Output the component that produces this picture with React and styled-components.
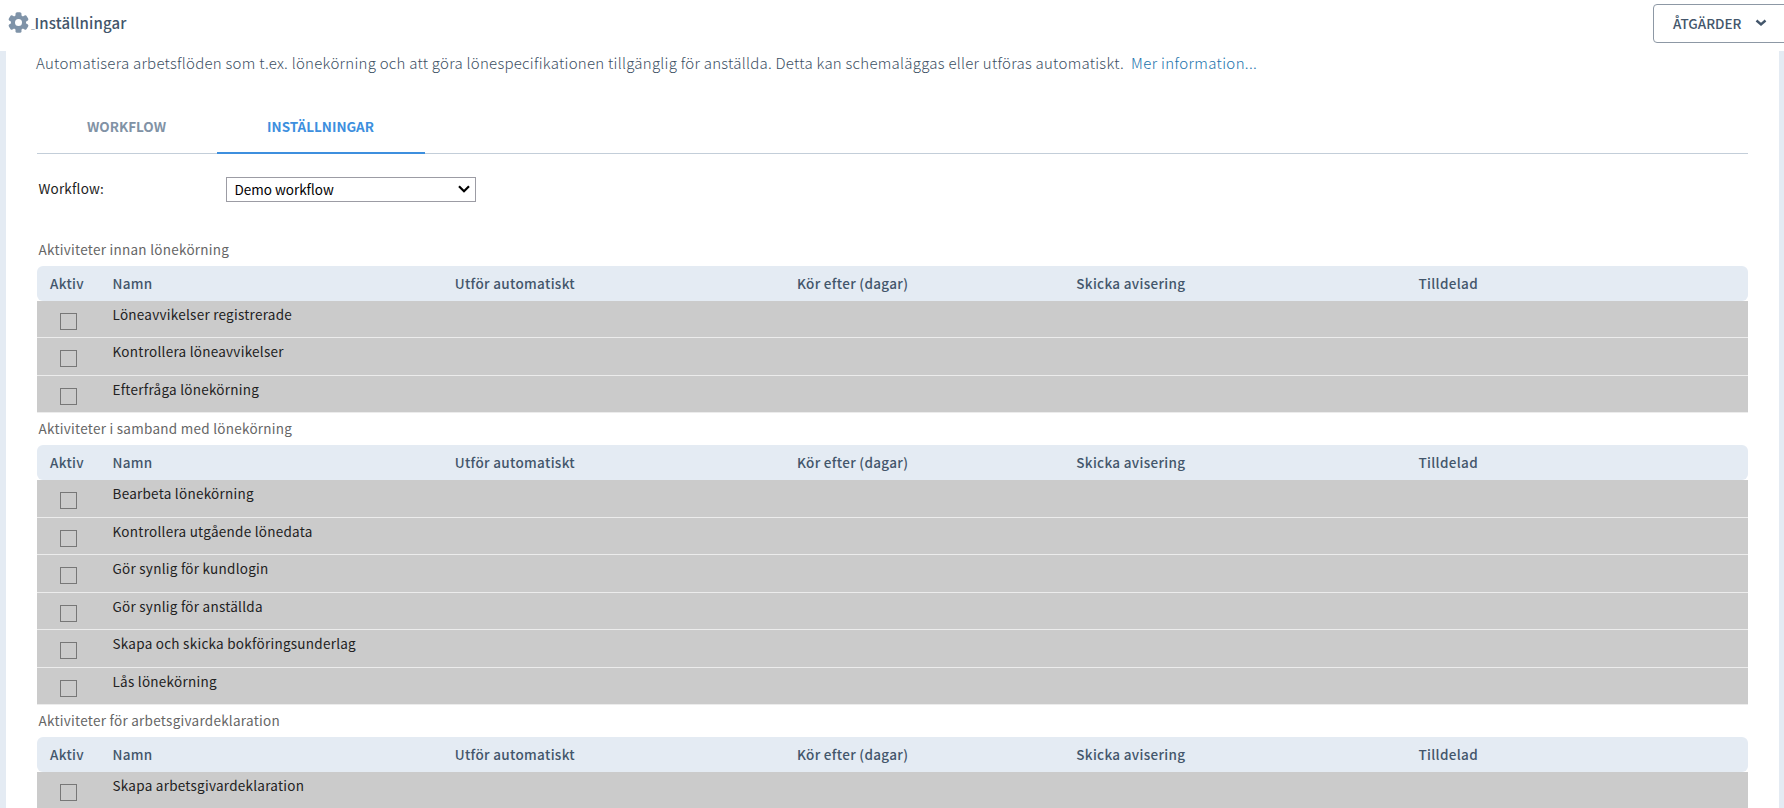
import React, { useState } from "react";
import styled, { createGlobalStyle } from "styled-components";

const columns = [
  "Aktiv",
  "Namn",
  "Utför automatiskt",
  "Kör efter (dagar)",
  "Skicka avisering",
  "Tilldelad",
];

const sections = [
  {
    title: "Aktiviteter innan lönekörning",
    rows: [
      "Löneavvikelser registrerade",
      "Kontrollera löneavvikelser",
      "Efterfråga lönekörning",
    ],
  },
  {
    title: "Aktiviteter i samband med lönekörning",
    rows: [
      "Bearbeta lönekörning",
      "Kontrollera utgående lönedata",
      "Gör synlig för kundlogin",
      "Gör synlig för anställda",
      "Skapa och skicka bokföringsunderlag",
      "Lås lönekörning",
    ],
  },
  {
    title: "Aktiviteter för arbetsgivardeklaration",
    rows: ["Skapa arbetsgivardeklaration"],
  },
];

const App = () => {
  const [tab, setTab] = useState("Inställningar");

  return (
    <StyledPage>
      <GlobalStyle />
      <StyledTopBar>
        <StyledTitle>
          <GearIcon />
          <StyledMark>_</StyledMark>
          <h1>Inställningar</h1>
        </StyledTitle>
        <StyledActions>
          Åtgärder
          <svg width="12" height="8" viewBox="0 0 12 8">
            <path d="M1.5 1.5 L6 5.5 L10.5 1.5" />
          </svg>
        </StyledActions>
      </StyledTopBar>
      <StyledContent>
        <StyledIntro>
          <span>
            Automatisera arbetsflöden som t.ex. lönekörning och att göra
            lönespecifikationen tillgänglig för anställda. Detta kan
            schemaläggas eller utföras automatiskt.
          </span>
          <StyledLink>Mer information...</StyledLink>
        </StyledIntro>
        <StyledTabs>
          {["Workflow", "Inställningar"].map((name) => (
            <StyledTab
              key={name}
              $active={tab === name}
              onClick={() => setTab(name)}
            >
              {name}
            </StyledTab>
          ))}
        </StyledTabs>
        <StyledField>
          <label>Workflow:</label>
          <StyledSelect>
            <span>Demo workflow</span>
            <svg width="12" height="8" viewBox="0 0 12 8">
              <path d="M1 1.2 L6 6.2 L11 1.2" />
            </svg>
          </StyledSelect>
        </StyledField>
        {sections.map((section) => (
          <section key={section.title}>
            <StyledCaption>{section.title}</StyledCaption>
            <StyledHead>
              {columns.map((column) => (
                <span key={column}>{column}</span>
              ))}
            </StyledHead>
            {section.rows.map((row) => (
              <StyledRow key={row}>
                <StyledCheckbox type="checkbox" />
                <StyledName>{row}</StyledName>
              </StyledRow>
            ))}
          </section>
        ))}
      </StyledContent>
    </StyledPage>
  );
};

const GearIcon = () => (
  <StyledGear viewBox="0 0 24 24">
    <circle cx="12" cy="12" r="8.6" />
    {[0, 60, 120].map((angle) => (
      <rect
        key={angle}
        x="8.6"
        y="0.2"
        width="6.8"
        height="23.6"
        rx="1.8"
        transform={`rotate(${angle} 12 12)`}
      />
    ))}
    <circle cx="12" cy="12" r="4" fill="#fff" />
  </StyledGear>
);

const GlobalStyle = createGlobalStyle`
  * {
    box-sizing: border-box;
  }
  body {
    margin: 0;
    overflow: hidden;
    background: #fff;
    font-family: "Noto Sans CJK JP", "Noto Sans", sans-serif;
    font-size: 13.5px;
    color: #222;
  }
`;

const StyledPage = styled.div`
  height: 808px;
  overflow: hidden;
`;

const StyledTopBar = styled.header`
  display: flex;
  justify-content: space-between;
  height: 51px;
  padding-top: 4px;
`;

const StyledTitle = styled.div`
  display: flex;
  align-items: center;
  height: 37px;
  padding-left: 8px;
  color: #43566b;
  h1 {
    margin: 0;
    font-size: 15px;
    font-weight: 500;
    letter-spacing: 0.15px;
  }
`;

const StyledMark = styled.span`
  width: 5.5px;
  padding-left: 2px;
  margin-top: 8px;
  font-size: 7px;
  line-height: 7px;
`;

const StyledGear = styled.svg`
  width: 21px;
  height: 21px;
  fill: #7f93a8;
`;

const StyledActions = styled.button`
  display: flex;
  align-items: center;
  justify-content: space-between;
  width: 141px;
  height: 39px;
  margin-right: -10px;
  padding: 0 26px 2px 19px;
  border: 1px solid #8d98a5;
  border-radius: 4px;
  background: #fff;
  color: #43566b;
  font-family: inherit;
  font-size: 13.5px;
  font-weight: 500;
  text-transform: uppercase;
  svg {
    fill: none;
    stroke: #43566b;
    stroke-width: 2.4;
  }
`;

const StyledContent = styled.main`
  height: 757px;
  padding: 0 31px;
  border-left: 6px solid #e4ebf3;
  border-right: 5px solid #e4ebf3;
  overflow: hidden;
`;

const StyledIntro = styled.p`
  display: flex;
  gap: 7px;
  height: 49px;
  margin: 0 0 0 -1px;
  font-size: 15px;
  font-weight: 300;
  letter-spacing: 0.26px;
  line-height: 23px;
  white-space: nowrap;
  color: #3c4f63;
`;

const StyledLink = styled.a`
  color: #1a73ad;
  letter-spacing: 0.36px;
  cursor: pointer;
`;

const StyledTabs = styled.nav`
  display: flex;
  height: 54px;
  border-bottom: 1px solid #c3ced9;
`;

const StyledTab = styled.button`
  height: 54px;
  padding: 0 51px 0 50px;
  border: 0;
  border-bottom: 2px solid ${(p) => (p.$active ? "#3d8fde" : "transparent")};
  background: none;
  color: ${(p) => (p.$active ? "#3d8fde" : "#8192a5")};
  font-family: inherit;
  font-size: 13.5px;
  font-weight: 700;
  text-transform: uppercase;
`;

const StyledField = styled.div`
  display: flex;
  height: 80px;
  padding: 23px 0 0 1.5px;
  label {
    width: 187.5px;
    line-height: 23px;
    letter-spacing: 0.2px;
  }
`;

const StyledSelect = styled.div`
  display: flex;
  align-items: center;
  justify-content: space-between;
  width: 250px;
  height: 25px;
  padding: 0 5px 1px 7.5px;
  border: 1px solid #9c9ca4;
  color: #000;
  svg {
    fill: none;
    stroke: #000;
    stroke-width: 2.2;
  }
`;

const StyledCaption = styled.h2`
  height: 31.9px;
  margin: 0;
  padding-left: 1.5px;
  font-size: 13.5px;
  font-weight: 400;
  letter-spacing: 0.27px;
  line-height: 31px;
  color: #666;
`;

const StyledHead = styled.div`
  display: grid;
  grid-template-columns: 75.5px 20% 20% 16.33% 20% 1fr;
  align-items: center;
  height: 35.1px;
  padding-bottom: 1px;
  border-radius: 6px;
  background: #e4ebf3;
  color: #43566b;
  font-weight: 500;
  letter-spacing: 0.32px;
  span:first-child {
    padding-left: 13px;
  }
`;

const StyledRow = styled.div`
  display: flex;
  height: 37.5px;
  border-bottom: 1px solid #ececec;
  background: #cbcbcb;
`;

const StyledCheckbox = styled.input`
  appearance: none;
  width: 17px;
  height: 17px;
  margin: 12px 35.5px 0 23px;
  border: 1px solid #777;
`;

const StyledName = styled.span`
  line-height: 26px;
  letter-spacing: 0.26px;
  color: #222;
`;

export default App;
